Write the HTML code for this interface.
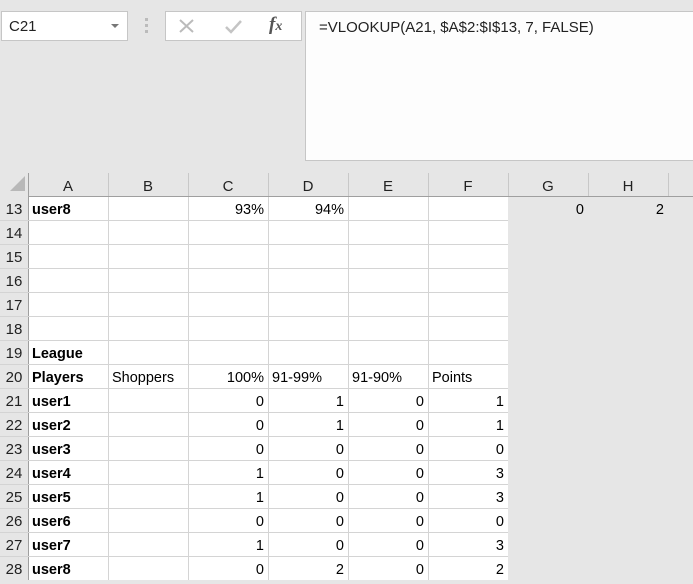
<!DOCTYPE html>
<html><head><meta charset="utf-8"><style>
*{margin:0;padding:0;box-sizing:border-box}
body{width:693px;height:580px;background:#e6e6e6;position:relative;overflow:hidden;font-family:"Liberation Sans",sans-serif;color:#000}
.a{position:absolute}
.box{position:absolute;background:#fff;border:1px solid #c6c6c6}
.c{position:absolute;height:23px;line-height:27px;font-size:14.5px;white-space:nowrap}
.b{font-weight:bold;padding-left:4px}
.r{text-align:right;padding-right:4px}
.l{padding-left:4px}
.hl{position:absolute;height:1px;background:#d4d4d4}
.vl{position:absolute;width:1px;background:#d4d4d4}
.ch{position:absolute;top:173px;height:23px;line-height:27px;text-align:center;font-size:15px;color:#222}
.rh{position:absolute;left:0;width:28px;height:23px;line-height:26px;text-align:center;font-size:15px;color:#222}
</style></head><body>
<div class="box" style="left:1px;top:11px;width:127px;height:30px"></div>
<div class="a" style="left:9px;top:18px;font-size:15px;color:#222">C21</div>
<div class="a" style="left:111px;top:24px;width:0;height:0;border-left:4px solid transparent;border-right:4px solid transparent;border-top:4px solid #777"></div>
<div class="a" style="left:145px;top:18px;width:3px;height:3px;background:#bbb"></div>
<div class="a" style="left:145px;top:24px;width:3px;height:3px;background:#bbb"></div>
<div class="a" style="left:145px;top:30px;width:3px;height:3px;background:#bbb"></div>
<div class="box" style="left:165px;top:11px;width:137px;height:30px"></div>
<svg class="a" style="left:178px;top:18px" width="18" height="16"><path d="M2 2L15 14M15 2L2 14" stroke="#bbb" stroke-width="2" fill="none"/></svg>
<svg class="a" style="left:224px;top:18px" width="20" height="16"><path d="M2 9L7 14L17 3" stroke="#c4c4c4" stroke-width="2.5" fill="none"/></svg>
<div class="a" style="left:269px;top:14px;font-family:'Liberation Serif',serif;font-style:italic;font-weight:bold;font-size:19px;color:#555">f<span style="font-size:14px">x</span></div>
<div class="box" style="left:305px;top:11px;width:390px;height:150px;background:#fdfdfd"></div>
<div class="a" style="left:319px;top:19px;font-size:15px;color:#222">=VLOOKUP(A21, $A$2:$I$13, 7, FALSE)</div>

<div class="a" style="left:28px;top:197px;width:480px;height:383px;background:#fff"></div>
<div class="a" style="left:0;top:196px;width:693px;height:1px;background:#9f9f9f"></div>
<div class="a" style="left:0;top:196px;width:28px;height:384px;background:#e6e6e6"></div>
<div class="a" style="left:28px;top:173px;width:1px;height:407px;background:#9f9f9f"></div>
<div class="a" style="left:10px;top:176px;width:0;height:0;border-left:15px solid transparent;border-bottom:15px solid #b8b8b8"></div>
<div class="vl" style="left:108px;top:173px;height:23px;background:#c8c8c8"></div>
<div class="vl" style="left:188px;top:173px;height:23px;background:#c8c8c8"></div>
<div class="vl" style="left:268px;top:173px;height:23px;background:#c8c8c8"></div>
<div class="vl" style="left:348px;top:173px;height:23px;background:#c8c8c8"></div>
<div class="vl" style="left:428px;top:173px;height:23px;background:#c8c8c8"></div>
<div class="vl" style="left:508px;top:173px;height:23px;background:#c8c8c8"></div>
<div class="vl" style="left:588px;top:173px;height:23px;background:#c8c8c8"></div>
<div class="vl" style="left:668px;top:173px;height:23px;background:#c8c8c8"></div>
<div class="ch" style="left:28px;width:80px">A</div>
<div class="ch" style="left:108px;width:80px">B</div>
<div class="ch" style="left:188px;width:80px">C</div>
<div class="ch" style="left:268px;width:80px">D</div>
<div class="ch" style="left:348px;width:80px">E</div>
<div class="ch" style="left:428px;width:80px">F</div>
<div class="ch" style="left:508px;width:80px">G</div>
<div class="ch" style="left:588px;width:80px">H</div>
<div class="vl" style="left:108px;top:197px;height:383px"></div>
<div class="vl" style="left:188px;top:197px;height:383px"></div>
<div class="vl" style="left:268px;top:197px;height:383px"></div>
<div class="vl" style="left:348px;top:197px;height:383px"></div>
<div class="vl" style="left:428px;top:197px;height:383px"></div>
<div class="hl" style="left:0;top:220px;width:508px"></div>
<div class="hl" style="left:0;top:244px;width:508px"></div>
<div class="hl" style="left:0;top:268px;width:508px"></div>
<div class="hl" style="left:0;top:292px;width:508px"></div>
<div class="hl" style="left:0;top:316px;width:508px"></div>
<div class="hl" style="left:0;top:340px;width:508px"></div>
<div class="hl" style="left:0;top:364px;width:508px"></div>
<div class="hl" style="left:0;top:388px;width:508px"></div>
<div class="hl" style="left:0;top:412px;width:508px"></div>
<div class="hl" style="left:0;top:436px;width:508px"></div>
<div class="hl" style="left:0;top:460px;width:508px"></div>
<div class="hl" style="left:0;top:484px;width:508px"></div>
<div class="hl" style="left:0;top:508px;width:508px"></div>
<div class="hl" style="left:0;top:532px;width:508px"></div>
<div class="hl" style="left:0;top:556px;width:508px"></div>
<div class="rh" style="top:197px">13</div>
<div class="rh" style="top:221px">14</div>
<div class="rh" style="top:245px">15</div>
<div class="rh" style="top:269px">16</div>
<div class="rh" style="top:293px">17</div>
<div class="rh" style="top:317px">18</div>
<div class="rh" style="top:341px">19</div>
<div class="rh" style="top:365px">20</div>
<div class="rh" style="top:389px">21</div>
<div class="rh" style="top:413px">22</div>
<div class="rh" style="top:437px">23</div>
<div class="rh" style="top:461px">24</div>
<div class="rh" style="top:485px">25</div>
<div class="rh" style="top:509px">26</div>
<div class="rh" style="top:533px">27</div>
<div class="rh" style="top:557px">28</div>
<div class="c b" style="left:28px;top:197px">user8</div>
<div class="c r" style="left:188px;top:197px;width:80px">93%</div>
<div class="c r" style="left:268px;top:197px;width:80px">94%</div>
<div class="c r" style="left:508px;top:197px;width:80px">0</div>
<div class="c r" style="left:588px;top:197px;width:80px">2</div>
<div class="c b" style="left:28px;top:341px">League</div>
<div class="c b" style="left:28px;top:365px">Players</div>
<div class="c l" style="left:108px;top:365px">Shoppers</div>
<div class="c r" style="left:188px;top:365px;width:80px">100%</div>
<div class="c l" style="left:268px;top:365px">91-99%</div>
<div class="c l" style="left:348px;top:365px">91-90%</div>
<div class="c l" style="left:428px;top:365px">Points</div>

<div class="c b" style="left:28px;top:389px">user1</div>
<div class="c r" style="left:188px;top:389px;width:80px">0</div><div class="c r" style="left:268px;top:389px;width:80px">1</div><div class="c r" style="left:348px;top:389px;width:80px">0</div><div class="c r" style="left:428px;top:389px;width:80px">1</div>
<div class="c b" style="left:28px;top:413px">user2</div>
<div class="c r" style="left:188px;top:413px;width:80px">0</div><div class="c r" style="left:268px;top:413px;width:80px">1</div><div class="c r" style="left:348px;top:413px;width:80px">0</div><div class="c r" style="left:428px;top:413px;width:80px">1</div>
<div class="c b" style="left:28px;top:437px">user3</div>
<div class="c r" style="left:188px;top:437px;width:80px">0</div><div class="c r" style="left:268px;top:437px;width:80px">0</div><div class="c r" style="left:348px;top:437px;width:80px">0</div><div class="c r" style="left:428px;top:437px;width:80px">0</div>
<div class="c b" style="left:28px;top:461px">user4</div>
<div class="c r" style="left:188px;top:461px;width:80px">1</div><div class="c r" style="left:268px;top:461px;width:80px">0</div><div class="c r" style="left:348px;top:461px;width:80px">0</div><div class="c r" style="left:428px;top:461px;width:80px">3</div>
<div class="c b" style="left:28px;top:485px">user5</div>
<div class="c r" style="left:188px;top:485px;width:80px">1</div><div class="c r" style="left:268px;top:485px;width:80px">0</div><div class="c r" style="left:348px;top:485px;width:80px">0</div><div class="c r" style="left:428px;top:485px;width:80px">3</div>
<div class="c b" style="left:28px;top:509px">user6</div>
<div class="c r" style="left:188px;top:509px;width:80px">0</div><div class="c r" style="left:268px;top:509px;width:80px">0</div><div class="c r" style="left:348px;top:509px;width:80px">0</div><div class="c r" style="left:428px;top:509px;width:80px">0</div>
<div class="c b" style="left:28px;top:533px">user7</div>
<div class="c r" style="left:188px;top:533px;width:80px">1</div><div class="c r" style="left:268px;top:533px;width:80px">0</div><div class="c r" style="left:348px;top:533px;width:80px">0</div><div class="c r" style="left:428px;top:533px;width:80px">3</div>
<div class="c b" style="left:28px;top:557px">user8</div>
<div class="c r" style="left:188px;top:557px;width:80px">0</div><div class="c r" style="left:268px;top:557px;width:80px">2</div><div class="c r" style="left:348px;top:557px;width:80px">0</div><div class="c r" style="left:428px;top:557px;width:80px">2</div>
</body></html>
